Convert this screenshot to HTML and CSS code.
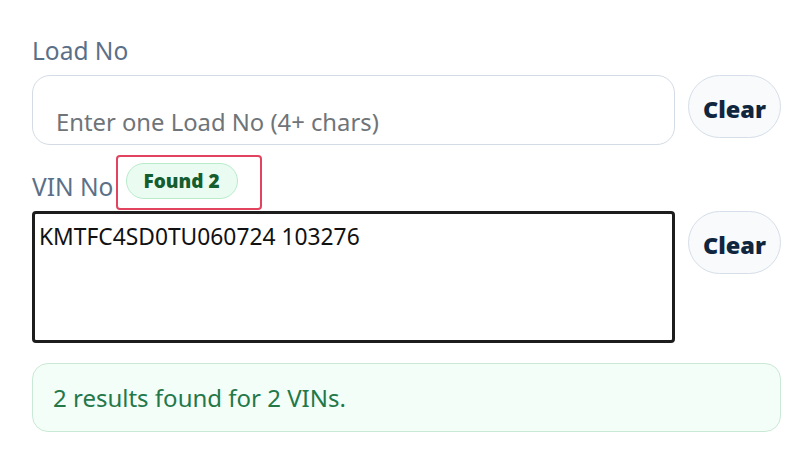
FILE: index.html
```html
<!DOCTYPE html>
<html lang="en">
<head>
    <meta charset="UTF-8">
    <meta name="viewport" content="width=device-width, initial-scale=1.0">
    <title>VIN Lookup</title>
    <link rel="stylesheet" href="styles.css">
</head>
<body>
    <div class="container">
        <div class="field">
            <label class="label" for="load-no">Load No</label>
            <div class="row">
                <input id="load-no" class="input" type="text" placeholder="Enter one Load No (4+ chars)">
                <button class="clear-btn">Clear</button>
            </div>
        </div>

        <div class="field field-vin">
            <div class="label-row">
                <label class="label" for="vin-no">VIN No</label>
                <span class="badge">Found 2</span>
                <span class="highlight"></span>
            </div>
            <div class="row">
                <textarea id="vin-no" class="textarea">KMTFC4SD0TU060724 103276</textarea>
                <button class="clear-btn">Clear</button>
            </div>
        </div>

        <div class="result">2 results found for 2 VINs.</div>
    </div>
</body>
</html>
```

FILE: styles.css
```css
body {
    font-family: "Noto Sans", "Open Sans", sans-serif;
    margin: 0;
    padding: 0;
    background-color: #fff;
}
.container {
    width: 749px;
    padding: 34px 0 0 32px;
}
.label {
    display: block;
    font-size: 24.5px;
    line-height: 34px;
    color: #5b7088;
    margin-bottom: 7px;
}
.row {
    display: flex;
    align-items: flex-start;
    gap: 13px;
}
.input {
    flex: 1;
    box-sizing: border-box;
    height: 70px;
    padding: 24px 23px 0;
    border: 1px solid #d3dbe4;
    border-radius: 18px;
    font-family: inherit;
    font-size: 23.8px;
    color: #1f2937;
    outline: none;
}
.input::placeholder {
    color: #6f7479;
}
.clear-btn {
    width: 93px;
    height: 63px;
    padding: 4px 0 0;
    border: 1px solid #d6dee8;
    border-radius: 32px;
    background: #f8fafc;
    font-family: inherit;
    font-size: 23.5px;
    font-weight: 900;
    color: #10263f;
    cursor: pointer;
}
.field-vin {
    margin-top: 17px;
}
.label-row {
    position: relative;
    display: flex;
    align-items: flex-start;
}
.label-row .label {
    margin-top: 8px;
    margin-bottom: 7px;
}
.badge {
    margin-left: 13px;
    margin-top: 1px;
    padding: 3px 17px 3px 16px;
    font-size: 19px;
    font-weight: 900;
    line-height: 28px;
    color: #155d2f;
    background: #eafcf1;
    border: 1px solid #b8ebcb;
    border-radius: 18px;
}
.highlight {
    position: absolute;
    left: 84px;
    top: -7px;
    width: 142px;
    height: 51px;
    border: 2.5px solid #e2435f;
    border-radius: 4px;
}
.textarea {
    flex: 1;
    box-sizing: border-box;
    height: 132px;
    padding: 7px 4px;
    border: 3px solid #1d1d1d;
    border-radius: 4px;
    font-family: inherit;
    font-size: 22.8px;
    color: #111;
    resize: none;
    outline: none;
}
.result {
    margin-top: 20px;
    padding: 18px 20px;
    font-size: 24px;
    line-height: 31px;
    color: #23784a;
    background: #f4fef8;
    border: 1px solid #c9e9d6;
    border-radius: 16px;
}
```
